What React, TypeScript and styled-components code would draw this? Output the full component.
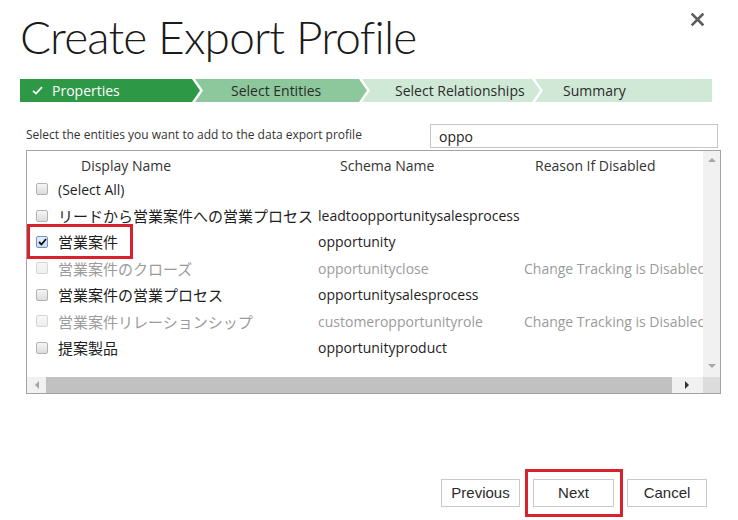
import React from "react";
import styled, { createGlobalStyle, css } from "styled-components";

const GlobalStyle = createGlobalStyle`
  html, body { margin: 0; padding: 0; background: #ffffff; }
  body { font-family: "Open Sans", "Noto Sans CJK JP", sans-serif; color: #222; }
  * { box-sizing: border-box; }
`;

const Dialog = styled.div`
  width: 738px;
  height: 520px;
  display: flex;
  flex-direction: column;
  background: #fff;
  overflow: hidden;
`;

const Header = styled.div`
  height: 70px;
  display: flex;
  justify-content: space-between;
  align-items: flex-start;
  padding: 10px 33px 0 20px;
`;

const Title = styled.h1`
  margin: 0;
  font-family: Lato, "Open Sans", sans-serif;
  font-weight: 300;
  font-size: 46px;
  line-height: 54px;
  letter-spacing: -0.85px;
  color: #1a1a1a;
`;

const CloseButton = styled.button`
  margin-top: 1px;
  width: 16px;
  height: 16px;
  padding: 0;
  border: 0;
  background: transparent;
  display: flex;
  align-items: center;
  justify-content: center;
`;

const Steps = styled.div`
  margin-top: 9px;
  height: 23px;
  display: flex;
  padding-left: 20px;
`;

type StepState = "done" | "current" | "todo";
type StepShape = "first" | "middle" | "last";

const shapes: Record<StepShape, string> = {
  first: "polygon(0 0, calc(100% - 8px) 0, 100% 50%, calc(100% - 8px) 100%, 0 100%)",
  middle:
    "polygon(0 0, calc(100% - 8px) 0, 100% 50%, calc(100% - 8px) 100%, 0 100%, 8px 50%)",
  last: "polygon(0 0, 100% 0, 100% 100%, 0 100%, 8px 50%)",
};

const stepColors: Record<StepState, { bg: string; fg: string }> = {
  done: { bg: "#2d9946", fg: "#ffffff" },
  current: { bg: "#8cc89b", fg: "#2b2b2b" },
  todo: { bg: "#cfe9d6", fg: "#2b2b2b" },
};

const Step = styled.div<{ $state: StepState; $shape: StepShape; $w: number; $pad: number }>`
  width: ${(p) => p.$w}px;
  height: 100%;
  display: flex;
  align-items: center;
  gap: 9px;
  padding-left: ${(p) => p.$pad}px;
  font-size: 14px;
  white-space: nowrap;
  background: ${(p) => stepColors[p.$state].bg};
  color: ${(p) => stepColors[p.$state].fg};
  clip-path: ${(p) => shapes[p.$shape]};
  ${(p) =>
    p.$shape !== "first" &&
    css`
      margin-left: -5px;
    `}
`;

const FilterRow = styled.div`
  margin-top: 22px;
  height: 24px;
  display: flex;
  justify-content: space-between;
  align-items: flex-start;
  padding: 0 20px 0 26px;
`;

const Instruction = styled.span`
  margin-top: 3px;
  font-size: 12px;
  line-height: 16px;
  color: #333;
`;

const SearchInput = styled.input`
  width: 288px;
  height: 24px;
  border: 1px solid #c6c6c6;
  padding: 0 8px;
  font-family: "Open Sans", sans-serif;
  font-size: 14px;
  color: #222;
  outline: none;
`;

const Panel = styled.div`
  margin: 2px 0 0 26px;
  width: 695px;
  height: 244px;
  border: 1px solid #a3a3a3;
  display: grid;
  grid-template-columns: 1fr 17px;
  grid-template-rows: 1fr 16px;
`;

const GridBody = styled.div`
  overflow: hidden;
  position: relative;
`;

const rowColumns = css`
  display: grid;
  grid-template-columns: 291px 206px 1fr;
  align-items: center;
  white-space: nowrap;
`;

const HeaderRow = styled.div`
  ${rowColumns};
  height: 25px;
  padding-top: 3px;
  font-size: 14px;
  color: #333;
`;

const HeaderCell = styled.div<{ $pad: number }>`
  padding-left: ${(p) => p.$pad}px;
`;

const Row = styled.div<{ $disabled?: boolean }>`
  ${rowColumns};
  position: relative;
  height: 26.4px;
  font-size: 14px;
  color: ${(p) => (p.$disabled ? "#9b9b9b" : "#1e1e1e")};
`;

const NameCell = styled.div`
  display: flex;
  align-items: center;
  gap: 10px;
  padding-left: 9px;
`;

const Cell = styled.div`
  overflow: hidden;
`;

const Jp = styled.span`
  font-family: "Noto Sans CJK JP", sans-serif;
  font-size: 15px;
`;

const Box = styled.span<{ $checked?: boolean; $disabled?: boolean }>`
  width: 12px;
  height: 12px;
  flex: none;
  border-radius: 2px;
  border: 1px solid ${(p) => (p.$checked ? "#6f93c4" : p.$disabled ? "#d6d6d6" : "#b2b2b2")};
  background: ${(p) =>
    p.$checked
      ? "linear-gradient(#e6effa, #c9dcf2)"
      : p.$disabled
      ? "linear-gradient(#f7f7f7, #eeeeee)"
      : "linear-gradient(#f6f6f6, #dcdcdc)"};
  display: flex;
  align-items: center;
  justify-content: center;
`;

const Highlight = styled.span<{ $top: number; $left: number; $w: number; $h: number }>`
  position: absolute;
  top: ${(p) => p.$top}px;
  left: ${(p) => p.$left}px;
  width: ${(p) => p.$w}px;
  height: ${(p) => p.$h}px;
  border: 3px solid #d8232f;
  pointer-events: none;
`;

const VScroll = styled.div`
  background: #f1f1f1;
  display: flex;
  flex-direction: column;
  justify-content: space-between;
  align-items: center;
  padding: 7px 0 9px;
`;

const HScroll = styled.div`
  background: #f1f1f1;
  display: flex;
  align-items: center;
`;

const ArrowCell = styled.div<{ $w: number }>`
  width: ${(p) => p.$w}px;
  height: 100%;
  display: flex;
  align-items: center;
  justify-content: center;
  flex: none;
`;

const Thumb = styled.div`
  width: 626px;
  height: 100%;
  background: #c1c1c1;
  flex: none;
`;

const Corner = styled.div`
  background: #dcdcdc;
`;

const Footer = styled.div`
  margin-top: auto;
  display: flex;
  justify-content: flex-end;
  gap: 13px;
  padding: 0 31px 13px 0;
`;

const Button = styled.button<{ $w: number }>`
  position: relative;
  width: ${(p) => p.$w}px;
  height: 28px;
  padding: 0 0 1px;
  border: 1px solid #c9c9c9;
  background: #fff;
  font-family: "Liberation Sans", Arial, sans-serif;
  font-size: 15px;
  color: #2a2a2a;
`;

const Tri = ({ dir, color }: { dir: "up" | "down" | "left" | "right"; color: string }) => {
  const pts: Record<string, string> = {
    up: "0,4 4,0 8,4",
    down: "0,0 8,0 4,4",
    left: "4,0 4,8 0,4",
    right: "0,0 0,8 4,4",
  };
  const vertical = dir === "up" || dir === "down";
  return (
    <svg width={vertical ? 8 : 4} height={vertical ? 4 : 8} viewBox={vertical ? "0 0 8 4" : "0 0 4 8"}>
      <polygon points={pts[dir]} fill={color} />
    </svg>
  );
};

type Entity = { name: string; jp: boolean; schema: string; reason?: string; checked?: boolean; disabled?: boolean; mark?: boolean };

const entities: Entity[] = [
  { name: "(Select All)", jp: false, schema: "" },
  { name: "リードから営業案件への営業プロセス", jp: true, schema: "leadtoopportunitysalesprocess" },
  { name: "営業案件", jp: true, schema: "opportunity", checked: true, mark: true },
  { name: "営業案件のクローズ", jp: true, schema: "opportunityclose", reason: "Change Tracking is Disabled", disabled: true },
  { name: "営業案件の営業プロセス", jp: true, schema: "opportunitysalesprocess" },
  { name: "営業案件リレーションシップ", jp: true, schema: "customeropportunityrole", reason: "Change Tracking is Disabled", disabled: true },
  { name: "提案製品", jp: true, schema: "opportunityproduct" },
];

const steps: { label: string; state: StepState; shape: StepShape; w: number; pad: number }[] = [
  { label: "Properties", state: "done", shape: "first", w: 180, pad: 12 },
  { label: "Select Entities", state: "current", shape: "middle", w: 172, pad: 36 },
  { label: "Select Relationships", state: "todo", shape: "middle", w: 178, pad: 33 },
  { label: "Summary", state: "todo", shape: "last", w: 177, pad: 28 },
];

export default function App() {
  return (
    <Dialog>
      <GlobalStyle />
      <Header>
        <Title>Create Export Profile</Title>
        <CloseButton aria-label="Close">
          <svg width="13" height="13" viewBox="0 0 13 13">
            <path d="M1.5 1.5 L11.5 11.5 M11.5 1.5 L1.5 11.5" stroke="#5c5c5c" strokeWidth="2.6" strokeLinecap="square" />
          </svg>
        </CloseButton>
      </Header>

      <Steps>
        {steps.map((s) => (
          <Step key={s.label} $state={s.state} $shape={s.shape} $w={s.w} $pad={s.pad}>
            {s.state === "done" && (
              <svg width="11" height="9" viewBox="0 0 11 9">
                <path d="M1 4.8 L4 7.6 L10 1.2" stroke="#fff" strokeWidth="1.8" fill="none" />
              </svg>
            )}
            {s.label}
          </Step>
        ))}
      </Steps>

      <FilterRow>
        <Instruction>Select the entities you want to add to the data export profile</Instruction>
        <SearchInput defaultValue="oppo" />
      </FilterRow>

      <Panel>
        <GridBody>
          <HeaderRow>
            <HeaderCell $pad={54}>Display Name</HeaderCell>
            <HeaderCell $pad={22}>Schema Name</HeaderCell>
            <HeaderCell $pad={11}>Reason If Disabled</HeaderCell>
          </HeaderRow>
          {entities.map((e) => (
            <Row key={e.name} $disabled={e.disabled}>
              <NameCell>
                <Box $checked={e.checked} $disabled={e.disabled}>
                  {e.checked && (
                    <svg width="9" height="8" viewBox="0 0 9 8">
                      <path d="M1 4 L3.5 6.5 L8 1" stroke="#111" strokeWidth="1.8" fill="none" />
                    </svg>
                  )}
                </Box>
                {e.jp ? <Jp>{e.name}</Jp> : e.name}
              </NameCell>
              <Cell>{e.schema}</Cell>
              <Cell>{e.reason ?? ""}</Cell>
              {e.mark && <Highlight $top={-5} $left={0} $w={106} $h={35} />}
            </Row>
          ))}
        </GridBody>
        <VScroll>
          <Tri dir="up" color="#a6a6a6" />
          <Tri dir="down" color="#a6a6a6" />
        </VScroll>
        <HScroll>
          <ArrowCell $w={19}>
            <Tri dir="left" color="#a6a6a6" />
          </ArrowCell>
          <Thumb />
          <ArrowCell $w={30}>
            <Tri dir="right" color="#333" />
          </ArrowCell>
        </HScroll>
        <Corner />
      </Panel>

      <Footer>
        <Button $w={79}>Previous</Button>
        <Button $w={81}>
          Next
          <Highlight $top={-11} $left={-9} $w={98} $h={48} />
        </Button>
        <Button $w={80}>Cancel</Button>
      </Footer>
    </Dialog>
  );
}
